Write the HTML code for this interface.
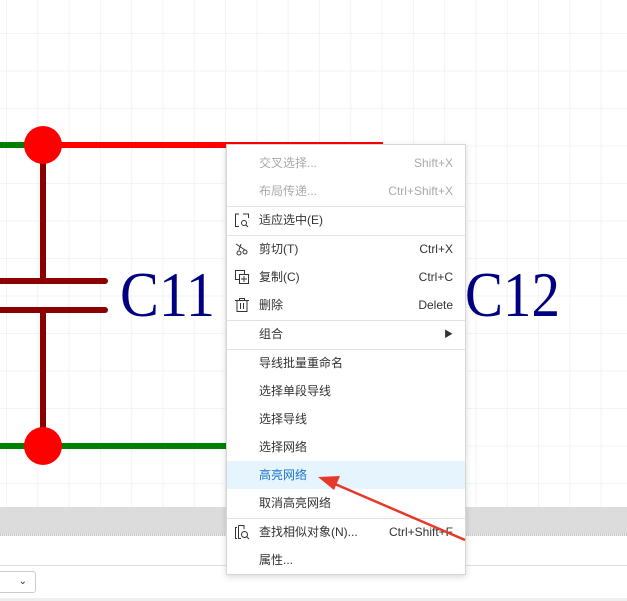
<!DOCTYPE html>
<html><head><meta charset="utf-8"><style>
*{margin:0;padding:0;box-sizing:border-box}
body{width:627px;height:601px;overflow:hidden;position:relative;background:#fff;font-family:"Liberation Sans","Noto Sans CJK SC",sans-serif}
.grid{position:absolute;left:0;top:0;width:627px;height:507px;
background-image:linear-gradient(to right,#f3f3f3 1px,transparent 1px),linear-gradient(to bottom,#f3f3f3 1px,transparent 1px);
background-size:31.3px 37.5px;background-position:6px 33px}
.abs{position:absolute}
.menu{position:absolute;left:226px;top:144px;width:240px;height:431px;background:#fff;border:1px solid #d6d6d6;box-shadow:0 2px 6px rgba(0,0,0,.15);font-size:12px;color:#333}
.it{position:absolute;left:0;width:238px;height:28px;line-height:28px;padding-left:32px}
.it .k{position:absolute;right:12px;top:0}
.dis{color:#aaa}
.sep{position:absolute;left:0;width:238px;height:1px;background:#e2e2e2}
.ic{position:absolute;left:7px;top:6px}
</style></head><body>
<div class="grid"></div>
<svg class="abs" style="left:0;top:0" width="627" height="507">
<line x1="0" y1="145" x2="43" y2="145" stroke="#008000" stroke-width="6"/>
<line x1="43" y1="145" x2="383" y2="145" stroke="#f00" stroke-width="6"/>
<line x1="0" y1="446" x2="230" y2="446" stroke="#008000" stroke-width="6"/>
<line x1="43" y1="145" x2="43" y2="280" stroke="#8b0000" stroke-width="6"/>
<line x1="43" y1="310" x2="43" y2="446" stroke="#8b0000" stroke-width="6"/>
<line x1="0" y1="281" x2="105" y2="281" stroke="#8b0000" stroke-width="6" stroke-linecap="round"/>
<line x1="0" y1="310" x2="105" y2="310" stroke="#8b0000" stroke-width="6" stroke-linecap="round"/>
<circle cx="43" cy="145" r="19" fill="#f00"/>
<circle cx="43" cy="446" r="19" fill="#f00"/>
<text x="120" y="316" font-family="Liberation Serif,serif" font-size="64" fill="#000080" textLength="95" lengthAdjust="spacingAndGlyphs">C11</text>
<text x="465" y="316" font-family="Liberation Serif,serif" font-size="64" fill="#000080" textLength="95" lengthAdjust="spacingAndGlyphs">C12</text>
</svg>
<div class="abs" style="left:0;top:507px;width:627px;height:26px;background:#dcdcdc"></div>
<div class="abs" style="left:0;top:533px;width:627px;height:3px;background:repeating-linear-gradient(90deg,#ccc 0 1px,#e8e8e8 1px 2px)"></div>
<div class="abs" style="left:0;top:565px;width:627px;height:1px;background:#ddd"></div>
<div class="abs" style="left:-4px;top:571px;width:40px;height:22px;border:1px solid #ccc;border-radius:3px;background:#fff;font-size:10px;text-align:right;padding-right:8px;line-height:20px;color:#333">⌄</div>
<div class="abs" style="left:0;top:598px;width:627px;height:3px;background:#eee"></div>
<div class="menu">
<div class="it dis" style="top:4px">交叉选择...<span class="k">Shift+X</span></div>
<div class="it dis" style="top:32px">布局传递...<span class="k">Ctrl+Shift+X</span></div>
<div class="sep" style="top:61px"></div>
<div class="it" style="top:61px"><svg class="ic" width="16" height="16"><path d="M5 2H1.5V14.5H5M9 2H14.5V6" fill="none" stroke="#333"/><circle cx="10" cy="11" r="2.5" fill="none" stroke="#333"/><path d="M12 13L14 15" stroke="#333"/></svg>适应选中(E)</div>
<div class="sep" style="top:90px"></div>
<div class="it" style="top:90px"><svg class="ic" width="16" height="16"><path d="M2 3L11 9M7 3L5 9" fill="none" stroke="#333"/><circle cx="11" cy="11" r="2" fill="none" stroke="#333"/><circle cx="5" cy="12" r="2" fill="none" stroke="#333"/></svg>剪切(T)<span class="k">Ctrl+X</span></div>
<div class="it" style="top:118px"><svg class="ic" width="16" height="16"><rect x="1.5" y="1.5" width="9" height="9" fill="none" stroke="#333"/><rect x="5.5" y="5.5" width="9" height="9" fill="#fff" stroke="#333"/><path d="M10 7V13M7 10H13" stroke="#333"/></svg>复制(C)<span class="k">Ctrl+C</span></div>
<div class="it" style="top:146px"><svg class="ic" width="16" height="16"><path d="M1 3.5H15M5.5 3.5V1.5H10.5V3.5M3 3.5V14.5H13V3.5M6.5 6V12M9.5 6V12" fill="none" stroke="#333"/></svg>删除<span class="k">Delete</span></div>
<div class="sep" style="top:175px"></div>
<div class="it" style="top:175px">组合<span class="k" style="font-size:9px">▶</span></div>
<div class="sep" style="top:204px"></div>
<div class="it" style="top:204px">导线批量重命名</div>
<div class="it" style="top:232px">选择单段导线</div>
<div class="it" style="top:260px">选择导线</div>
<div class="it" style="top:288px">选择网络</div>
<div class="it" style="top:316px;background:#e6f4fd;color:#1a73c8">高亮网络</div>
<div class="it" style="top:344px">取消高亮网络</div>
<div class="sep" style="top:373px"></div>
<div class="it" style="top:373px"><svg class="ic" width="16" height="16"><path d="M3 14.5H1.5V3.5H3M4.5 1.5H10V5" fill="none" stroke="#333"/><path d="M4.5 1.5V14.5H7" fill="none" stroke="#333"/><circle cx="10.5" cy="10.5" r="3" fill="none" stroke="#333"/><path d="M12.5 12.5L15 15" stroke="#333"/></svg>查找相似对象(N)...<span class="k">Ctrl+Shift+F</span></div>
<div class="it" style="top:401px">属性...</div>
</div>
<svg class="abs" style="left:0;top:0" width="627" height="601">
<line x1="465" y1="540" x2="335" y2="484" stroke="#e8382b" stroke-width="2.5"/>
<polygon points="318,477 340,476 334,490" fill="#e8382b"/>
</svg>
</body></html>
